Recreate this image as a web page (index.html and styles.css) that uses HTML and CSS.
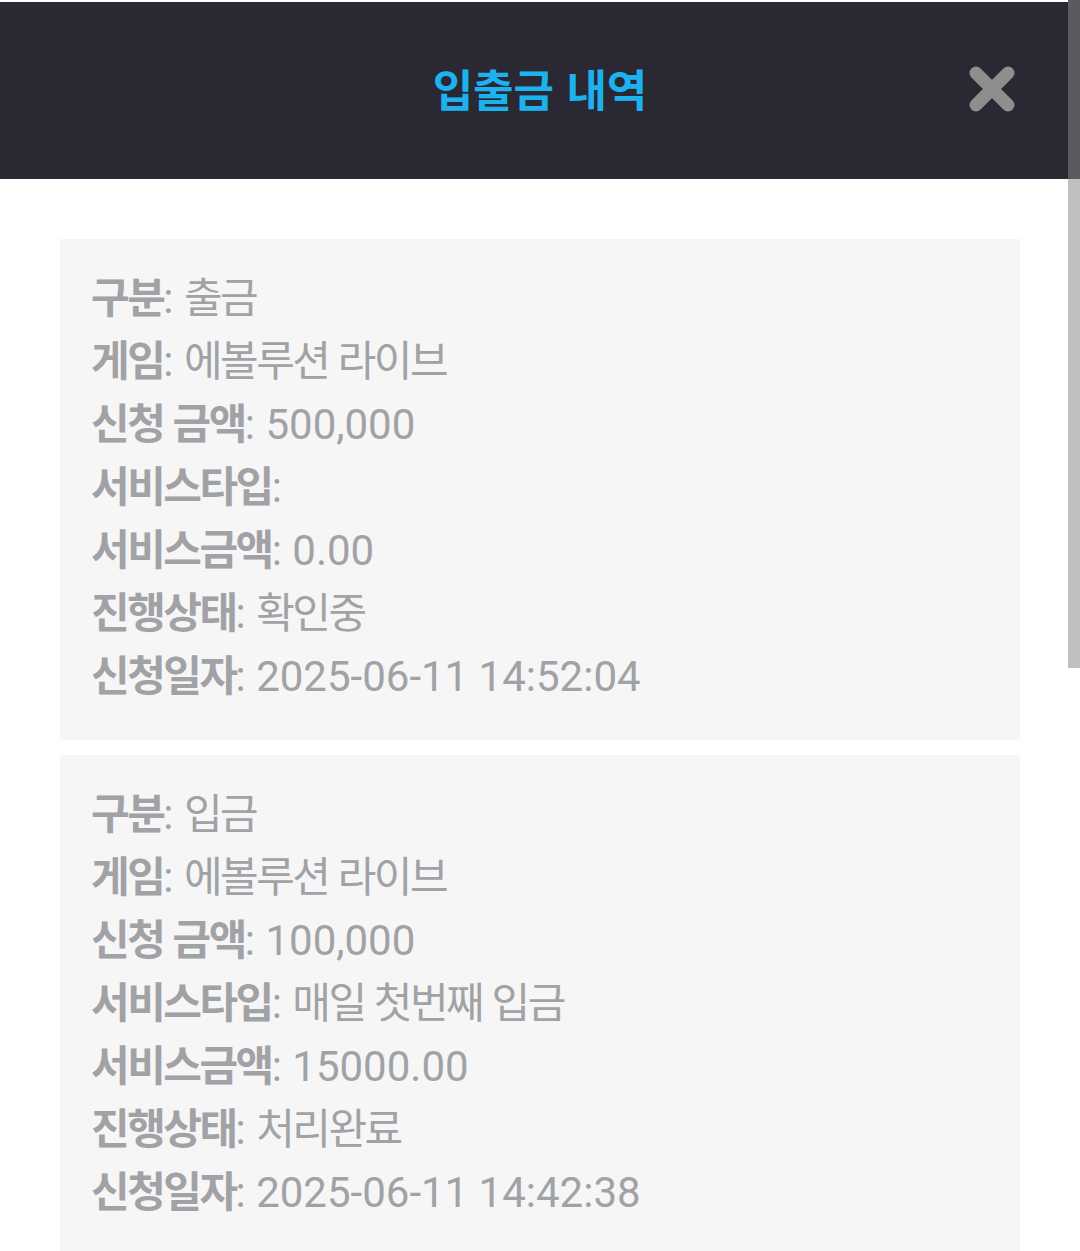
FILE: index.html
```html
<!DOCTYPE html>
<html lang="ko">
<head>
    <meta charset="UTF-8">
    <meta name="viewport" content="width=device-width, initial-scale=1.0">
    <title>입출금 내역</title>
    <link rel="stylesheet" href="styles.css">
</head>
<body>
    <div id="header">
        <h3>입출금 내역</h3>
        <button class="close" aria-label="닫기">
            <svg width="50" height="50" viewBox="0 0 50 50">
                <path d="M9 9 L41 41 M41 9 L9 41" stroke="#8e8e8e" stroke-width="13" stroke-linecap="round"/>
            </svg>
        </button>
    </div>

    <div id="list">
        <div class="card">
            <p><b>구분</b>: <span class="ko">출금</span></p>
            <p><b>게임</b>: <span class="ko">에볼루션 라이브</span></p>
            <p><b>신청 금액</b>: 500,000</p>
            <p><b>서비스타입</b>: </p>
            <p><b>서비스금액</b>: 0.00</p>
            <p><b>진행상태</b>: <span class="ko">확인중</span></p>
            <p><b>신청일자</b>: 2025-06-11 14:52:04</p>
        </div>

        <div class="card">
            <p><b>구분</b>: <span class="ko">입금</span></p>
            <p><b>게임</b>: <span class="ko">에볼루션 라이브</span></p>
            <p><b>신청 금액</b>: 100,000</p>
            <p><b>서비스타입</b>: <span class="ko">매일 첫번째 입금</span></p>
            <p><b>서비스금액</b>: 15000.00</p>
            <p><b>진행상태</b>: <span class="ko">처리완료</span></p>
            <p><b>신청일자</b>: 2025-06-11 14:42:38</p>
        </div>
    </div>

    <div class="scrollbar"></div>
</body>
</html>
```

FILE: styles.css
```css
*{
    margin: 0;
    padding: 0;
    box-sizing: border-box;
}

body{
    background-color: #ffffff;
    font-family: Roboto, "Noto Sans CJK KR", sans-serif;
    overflow: hidden;
    height: 1251px;
}

#header{
    height: 177px;
    margin-top: 2px;
    background-color: #2a2832;
    display: flex;
    align-items: center;
    justify-content: center;
    position: relative;
}

#header h3{
    color: #1cb2f0;
    font-size: 44px;
    font-weight: 700;
    font-family: "Noto Sans CJK KR", sans-serif;
    margin-top: -6px;
}

.close{
    position: absolute;
    right: 63px;
    top: 62px;
    background: none;
    border: none;
    width: 50px;
    height: 50px;
}

#list{
    padding: 60px 60px 0 60px;
    display: flex;
    flex-direction: column;
    gap: 15px;
}

.card{
    background-color: #f6f6f6;
    padding: 28px 31px 32px 31px;
}

.card p{
    font-size: 42px;
    line-height: 63px;
    color: #a1a2a6;
    white-space: pre;
}

.card b,
.card .ko{
    font-family: "Noto Sans CJK KR", sans-serif;
    line-height: 1;
    letter-spacing: -2.5px;
}

.card b{
    font-weight: 700;
}

.scrollbar{
    position: absolute;
    top: 0;
    right: 0;
    width: 12px;
    height: 668px;
    background-color: #bfbfbf;
    border-top: 179px solid #5b5a61;
}
```
